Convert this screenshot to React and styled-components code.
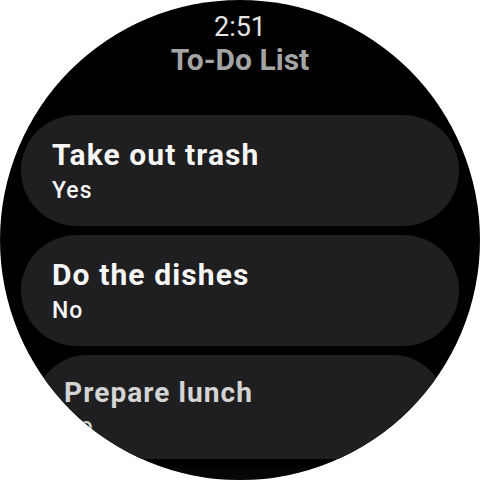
import React from 'react';
import styled, { createGlobalStyle } from 'styled-components';

const GlobalStyle = createGlobalStyle`
  html, body {
    margin: 0;
    padding: 0;
    background: #ffffff;
  }
  body {
    font-family: Roboto, "Noto Sans", "Liberation Sans", sans-serif;
  }
`;

// the last rows are shrunk and faded as they reach the round bottom edge
const TASKS = [
  { id: 0, title: 'Take out trash', done: 'Yes', scale: 1, shift: 0, fade: 1 },
  { id: 1, title: 'Do the dishes', done: 'No', scale: 1, shift: 0, fade: 1 },
  { id: 2, title: 'Prepare lunch', done: 'No', scale: 0.936, shift: 0, fade: 0.85 },
  { id: 3, title: '', done: '', scale: 0.87, shift: -8, fade: 0.05 },
];

const App = () => {
  return (
    <>
      <GlobalStyle />
      <Watch>
        <Header>
          <Time>2:51</Time>
          <Title>To-Do List</Title>
        </Header>
        <List>
          {TASKS.map((task) => (
            <Chip
              key={task.id}
              $scale={task.scale}
              $shift={task.shift}
              $fade={task.fade}
            >
              {task.title && <ChipLabel>{task.title}</ChipLabel>}
              {task.done && <ChipSub>{task.done}</ChipSub>}
            </Chip>
          ))}
        </List>
      </Watch>
    </>
  );
};

export default App;

const Watch = styled.div`
  width: 480px;
  height: 480px;
  border-radius: 50%;
  background: #000000;
  overflow: hidden;
  display: flex;
  flex-direction: column;
`;

const Header = styled.div`
  display: flex;
  flex-direction: column;
  align-items: center;
  padding-top: 12px;
`;

const Time = styled.div`
  font-size: 27px;
  line-height: 30px;
  font-weight: 400;
  color: #e4e4e4;
`;

const Title = styled.div`
  font-size: 30px;
  line-height: 36px;
  font-weight: 700;
  color: #a4a4a4;
`;

const List = styled.div`
  display: flex;
  flex-direction: column;
  gap: 9px;
  padding: 0 21px;
  margin-top: 37px;
`;

const Chip = styled.div`
  flex-shrink: 0;
  height: 111px;
  box-sizing: border-box;
  padding: 21px 31px 20px;
  border-radius: 56px;
  background: #1f1f21;
  display: flex;
  flex-direction: column;
  gap: 2px;
  transform-origin: center top;
  transform: translateY(${(p) => p.$shift}px) scale(${(p) => p.$scale});
  opacity: ${(p) => (p.$fade < 0.5 ? p.$fade * 4 : 1)};
  color: rgba(246, 246, 246, ${(p) => p.$fade});
`;

const ChipLabel = styled.div`
  font-size: 30px;
  line-height: 38px;
  font-weight: 700;
  letter-spacing: 1.1px;
  white-space: nowrap;
`;

const ChipSub = styled.div`
  font-size: 23px;
  line-height: 30px;
  font-weight: 500;
  letter-spacing: 1px;
`;
